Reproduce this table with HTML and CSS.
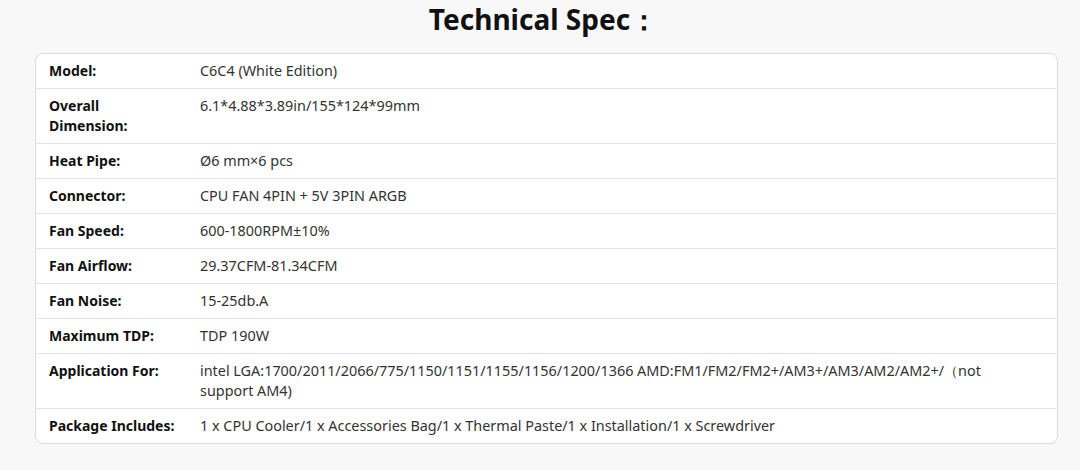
FILE: index.html
```html
<!DOCTYPE html>
<html>
<head>
<meta charset="utf-8">
<link rel="stylesheet" href="styles.css">
</head>
<body>
<h2 class="title">Technical Spec：</h2>
<div class="spec">
  <div class="row"><div class="label">Model:</div><div class="value">C6C4 (White Edition)</div></div>
  <div class="row"><div class="label">Overall Dimension:</div><div class="value">6.1*4.88*3.89in/155*124*99mm</div></div>
  <div class="row"><div class="label">Heat Pipe:</div><div class="value">Ø6 mm×6 pcs</div></div>
  <div class="row"><div class="label">Connector:</div><div class="value">CPU FAN 4PIN + 5V 3PIN ARGB</div></div>
  <div class="row"><div class="label">Fan Speed:</div><div class="value">600-1800RPM±10%</div></div>
  <div class="row"><div class="label">Fan Airflow:</div><div class="value">29.37CFM-81.34CFM</div></div>
  <div class="row"><div class="label">Fan Noise:</div><div class="value">15-25db.A</div></div>
  <div class="row"><div class="label">Maximum TDP:</div><div class="value">TDP 190W</div></div>
  <div class="row"><div class="label">Application For:</div><div class="value">intel LGA:1700/2011/2066/775/1150/1151/1155/1156/1200/1366 AMD:FM1/FM2/FM2+/AM3+/AM3/AM2/AM2+/（not support AM4)</div></div>
  <div class="row"><div class="label">Package Includes:</div><div class="value">1 x CPU Cooler/1 x Accessories Bag/1 x Thermal Paste/1 x Installation/1 x Screwdriver</div></div>
</div>
</body>
</html>
```
FILE: styles.css
```css
html, body {
  margin: 0;
  padding: 0;
  background: #f8f8f8;
}
body {
  font-family: "Noto Sans", "Open Sans", sans-serif;
  color: #222;
  padding: 0 22px 0 35px;
}
.title {
  margin: 0;
  height: 38px;
  line-height: 38px;
  text-align: center;
  font-size: 28px;
  font-weight: 700;
  color: #111;
  padding-right: 6px;
}
.spec {
  margin-top: 15px;
  background: #fff;
  border: 1px solid #dcdcdc;
  border-radius: 8px;
  overflow: hidden;
}
.row {
  display: grid;
  grid-template-columns: 150px 1fr;
  border-top: 1px solid #e3e3e3;
}
.row:first-child {
  border-top: none;
}
.label, .value {
  padding: 7px 14px;
  line-height: 20px;
}
.label {
  font-size: 14px;
  font-weight: 700;
  color: #111;
  padding: 7px 8px 7px 13px;
}
.value {
  font-size: 14.4px;
  color: #333;
  padding-right: 24px;
}
```
